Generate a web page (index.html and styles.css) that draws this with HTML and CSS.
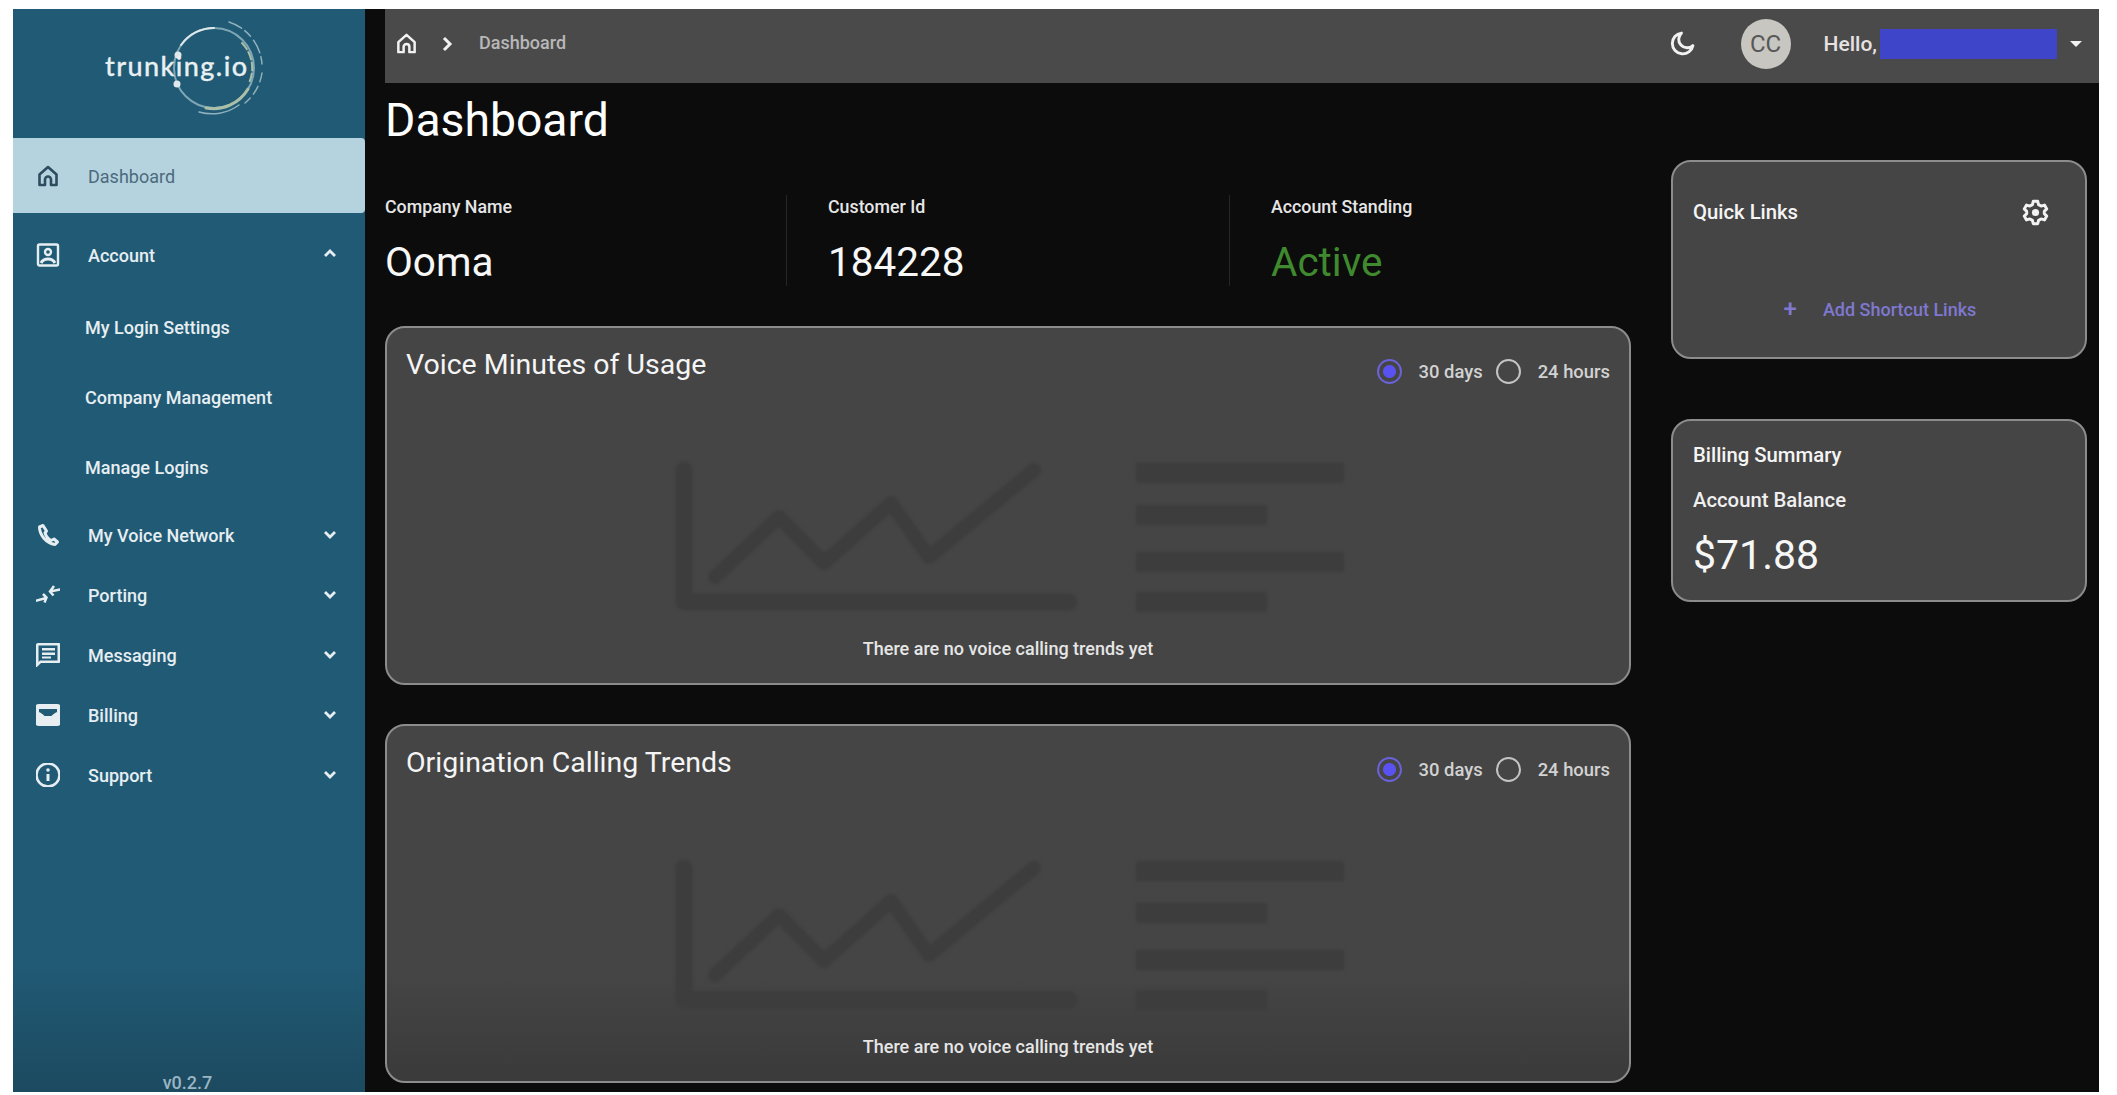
FILE: index.html
```html
<!DOCTYPE html>
<html lang="en">
<head>
  <meta charset="UTF-8">
  <title>trunking.io Dashboard</title>
  <link rel="stylesheet" href="styles.css">
</head>
<body>
  <div class="app">
    <aside class="sidebar">
      <div class="brand">
        <svg class="logo" width="190" height="110" viewBox="0 0 190 110" fill="none" stroke-linecap="round">
          <circle cx="120" cy="54" r="40" stroke="#7fa6b4" stroke-width="2"/>
          <path d="M87 31a40 40 0 0 1 33-17" stroke="#dfe9ec" stroke-width="2"/>
          <path d="M154 75a40 40 0 0 1-42 19" stroke="#a9bfa8" stroke-width="3"/>
          <path d="M135 8a48 48 0 0 1 33 42" stroke="#8fb0bd" stroke-width="1.5" stroke-dasharray="14 4 8 5"/>
          <path d="M168 59a48 48 0 0 1-17 30" stroke="#8fb0bd" stroke-width="1.5" stroke-dasharray="9 5"/>
          <path d="M145 91a46 46 0 0 1-40 7" stroke="#8fb0bd" stroke-width="1.5"/>
          <path d="M148 29a36 36 0 0 1 7 40" stroke="#a9bfa8" stroke-width="2" stroke-dasharray="8 3"/>
          <circle cx="84" cy="41" r="3.5" fill="#dfe9ec"/>
          <circle cx="83" cy="70" r="3.5" fill="#dfe9ec"/>
          <text class="logo-text" x="11" y="62" textLength="142">trunking.io</text>
        </svg>
      </div>

      <nav class="nav">
        <a class="nav-item active">
          <svg class="nav-icon" viewBox="0 0 24 24" fill="none" stroke="currentColor" stroke-width="2.600" stroke-linejoin="round"><path d="M3.500 21V10.500L12 3l8.500 7.500V21H15v-5.500a3 3 0 0 0-6 0V21z"/></svg>
          <span>Dashboard</span>
        </a>
        <a class="nav-item account">
          <svg class="nav-icon" viewBox="0 0 24 24" fill="none" stroke="currentColor" stroke-width="2.400"><rect x="2" y="1.500" width="20" height="21" rx="1.500"/><circle cx="12" cy="9" r="3"/><path d="M5 20c1.500-3 4-4 7-4s5.500 1 7 4" stroke-width="3"/></svg>
          <span>Account</span>
          <svg class="chevron up" viewBox="0 0 16 16" fill="none" stroke="currentColor" stroke-width="2.800"><path d="M3 11l5-5 5 5"/></svg>
        </a>
        <div class="sub-nav">
          <a class="sub-item">My Login Settings</a>
          <a class="sub-item">Company Management</a>
          <a class="sub-item">Manage Logins</a>
        </div>
        <a class="nav-item">
          <svg class="nav-icon" viewBox="0 0 24 24" fill="none" stroke="currentColor" stroke-width="3" stroke-linejoin="round"><path d="M7 2.500L3.500 4C3.500 12 10 20 19 21.500l2.500-2.500-3.500-3-3 1.500c-3-1.500-5-4.500-6-7.500L10.500 8z"/></svg>
          <span>My Voice Network</span>
          <svg class="chevron" viewBox="0 0 16 16" fill="none" stroke="currentColor" stroke-width="2.800"><path d="M3 5l5 5 5-5"/></svg>
        </a>
        <a class="nav-item">
          <svg class="nav-icon" viewBox="0 0 24 24" fill="none" stroke="currentColor" stroke-width="2.500"><path d="M-1 18l11-3M7 11l3.500 3.500-2 5"/><path d="M26 6L14 8.500M18 3l-4 5.500 3.500 4"/></svg>
          <span>Porting</span>
          <svg class="chevron" viewBox="0 0 16 16" fill="none" stroke="currentColor" stroke-width="2.800"><path d="M3 5l5 5 5-5"/></svg>
        </a>
        <a class="nav-item">
          <svg class="nav-icon" viewBox="0 0 24 24" fill="currentColor"><path d="M23 0H2C.900 0 0 .900 0 2l-.100 23L5 20h18c.600 0 1-.400 1-1V1c0-.600-.400-1-1-1zm-1.500 17.500H4L2.500 19V2.500h19zM6 5h13v2.600H6zm0 4.500h13v2.600H6zm0 4h9v2H6z"/></svg>
          <span>Messaging</span>
          <svg class="chevron" viewBox="0 0 16 16" fill="none" stroke="currentColor" stroke-width="2.800"><path d="M3 5l5 5 5-5"/></svg>
        </a>
        <a class="nav-item">
          <svg class="nav-icon" viewBox="0 0 24 24"><rect x="-1" y="1" width="26" height="22" rx="4" fill="currentColor"/><path d="M3 6h18v3c-2 1-4 2-5.500 4h-7C7 11 5 10 3 9z" fill="#215a75"/></svg>
          <span>Billing</span>
          <svg class="chevron" viewBox="0 0 16 16" fill="none" stroke="currentColor" stroke-width="2.800"><path d="M3 5l5 5 5-5"/></svg>
        </a>
        <a class="nav-item">
          <svg class="nav-icon" viewBox="0 0 24 24" fill="none" stroke="currentColor" stroke-width="2.600"><circle cx="12" cy="12" r="11.500"/><path d="M12 11v7" stroke-width="3"/><circle cx="12" cy="7" r="1.800" fill="currentColor" stroke="none"/></svg>
          <span>Support</span>
          <svg class="chevron" viewBox="0 0 16 16" fill="none" stroke="currentColor" stroke-width="2.800"><path d="M3 5l5 5 5-5"/></svg>
        </a>
      </nav>
      <div class="version">v0.2.7</div>
    </aside>

    <div class="main">
      <header class="topbar">
        <svg class="crumb-home" viewBox="0 0 24 24" fill="none" stroke="currentColor" stroke-width="2.600" stroke-linejoin="round"><path d="M3.500 21V10.500L12 3l8.500 7.500V21H15v-5.500a3 3 0 0 0-6 0V21z"/></svg>
        <svg class="crumb-sep" viewBox="0 0 16 16" fill="none" stroke="currentColor" stroke-width="3"><path d="M5 2l6 6-6 6"/></svg>
        <span class="crumb-text">Dashboard</span>
        <svg class="moon" viewBox="0 0 24 24" fill="none" stroke="currentColor" stroke-width="2.800" stroke-linejoin="round"><path d="M11 2a10 10 0 1 0 11 12 8 8 0 0 1-11-12z"/></svg>
        <div class="avatar">CC</div>
        <span class="hello">Hello,</span>
        <span class="redacted"></span>
        <span class="caret"></span>
      </header>

      <div class="content">
        <div class="left-col">
          <h1 class="page-title">Dashboard</h1>
          <div class="info-row">
            <div class="info-item">
              <div class="info-label">Company Name</div>
              <div class="info-value">Ooma</div>
            </div>
            <div class="info-item">
              <div class="info-label">Customer Id</div>
              <div class="info-value">184228</div>
            </div>
            <div class="info-item last">
              <div class="info-label">Account Standing</div>
              <div class="info-value active-text">Active</div>
            </div>
          </div>

          <section class="card chart-card">
            <div class="card-head">
              <h2>Voice Minutes of Usage</h2>
              <div class="range">
                <span class="radio on"></span><span class="range-label">30 days</span>
                <span class="radio"></span><span class="range-label">24 hours</span>
              </div>
            </div>
            <svg class="placeholder" width="675" height="155" viewBox="0 0 675 155" fill="none">
              <path d="M13 10V142H398" stroke="#3d3d3d" stroke-width="17" stroke-linecap="round" stroke-linejoin="round"/>
              <path d="M44 117L108 57l45 46 67-60 38 54L363 10" stroke="#3d3d3d" stroke-width="14" stroke-linecap="round" stroke-linejoin="round"/>
              <g fill="#3d3d3d">
                <rect x="465" y="3" width="208" height="20"/>
                <rect x="465" y="45" width="131" height="20"/>
                <rect x="465" y="92" width="208" height="20"/>
                <rect x="465" y="132" width="131" height="20"/>
              </g>
            </svg>
            <p class="empty-note">There are no voice calling trends yet</p>
          </section>

          <section class="card chart-card fade">
            <div class="card-head">
              <h2>Origination Calling Trends</h2>
              <div class="range">
                <span class="radio on"></span><span class="range-label">30 days</span>
                <span class="radio"></span><span class="range-label">24 hours</span>
              </div>
            </div>
            <svg class="placeholder" width="675" height="155" viewBox="0 0 675 155" fill="none">
              <path d="M13 10V142H398" stroke="#3d3d3d" stroke-width="17" stroke-linecap="round" stroke-linejoin="round"/>
              <path d="M44 117L108 57l45 46 67-60 38 54L363 10" stroke="#3d3d3d" stroke-width="14" stroke-linecap="round" stroke-linejoin="round"/>
              <g fill="#3d3d3d">
                <rect x="465" y="3" width="208" height="20"/>
                <rect x="465" y="45" width="131" height="20"/>
                <rect x="465" y="92" width="208" height="20"/>
                <rect x="465" y="132" width="131" height="20"/>
              </g>
            </svg>
            <p class="empty-note">There are no voice calling trends yet</p>
          </section>
        </div>

        <div class="right-col">
          <section class="card quick-links">
            <div class="quick-head">
              <h3>Quick Links</h3>
              <svg class="gear" viewBox="0 0 24 24" fill="none" stroke="currentColor" stroke-width="2.600" stroke-linejoin="round"><path d="M10 2h4l.700 3 2.300 1.300 3-.900 2 3.400-2.200 2.200v2l2.200 2.200-2 3.400-3-.900L14.700 19l-.700 3h-4l-.700-3L7 17.700l-3 .900-2-3.400L4.200 13v-2L2 8.800l2-3.400 3 .900L9.300 5z"/><circle cx="12" cy="12" r="3.200" fill="currentColor" stroke="none"/></svg>
            </div>
            <a class="add-link"><span class="plus">+</span><span>Add Shortcut Links</span></a>
          </section>
          <section class="card billing">
            <h3>Billing Summary</h3>
            <div class="balance-label">Account Balance</div>
            <div class="balance">$71.88</div>
          </section>
        </div>
      </div>
    </div>
  </div>
</body>
</html>
```

FILE: styles.css
```css
html {
  overflow: hidden;
}
body {
  margin: 0;
  padding: 9px 18px 3px 13px;
  height: 1095px;
  box-sizing: border-box;
  background-color: #fff;
  font-family: Roboto, Arial, sans-serif;
  color: #f2f2f2;
}
h1, h2, h3, p {
  margin: 0;
}
.app {
  display: flex;
  height: 1083px;
  overflow: hidden;
  background-color: #0c0c0c;
}

/* sidebar */
.sidebar {
  width: 352px;
  flex-shrink: 0;
  display: flex;
  flex-direction: column;
  background: linear-gradient(#215a75 0, #215a75 88%, #1c4a60 100%);
  color: #e6eef2;
}
.brand {
  height: 129px;
  display: flex;
  justify-content: center;
  align-items: flex-start;
  box-sizing: border-box;
  padding-top: 5px;
}
.logo-text {
  font-family: Lato, Roboto, sans-serif;
  font-size: 27px;
  font-weight: 500;
  fill: #e9f0f2;
  stroke: #e9f0f2;
  stroke-width: 0.3px;
}
.nav {
  display: flex;
  flex-direction: column;
}
.nav-item {
  display: flex;
  align-items: center;
  height: 60px;
  padding: 0 27px 0 23px;
  font-size: 18px;
  font-weight: 500;
}
.nav-item.active {
  height: 75px;
  background-color: #b5d2df;
  color: #4c6b7c;
  border-radius: 0 4px 4px 0;
  font-weight: 400;
}
.nav-item.active span {
  padding-top: 2px;
}
.nav-item.active .nav-icon {
  color: #2c4d5f;
}
.nav-item.account {
  margin-top: 12px;
}
.nav-icon {
  width: 24px;
  height: 24px;
  flex-shrink: 0;
  margin-right: 28px;
}
.chevron {
  width: 16px;
  height: 16px;
  margin-left: auto;
}
.chevron.up {
  margin-top: -4px;
}
.sub-nav {
  padding: 7px 0 3px;
}
.sub-item {
  display: flex;
  align-items: center;
  height: 70px;
  padding-left: 72px;
  font-size: 18px;
  font-weight: 500;
}
.version {
  margin-top: auto;
  padding-right: 3px;
  text-align: center;
  font-size: 18px;
  font-weight: 500;
  line-height: 18px;
  color: #9ab5c4;
}

/* top bar */
.main {
  flex: 1;
  min-width: 0;
  padding-left: 20px;
}
.topbar {
  display: flex;
  align-items: center;
  height: 74px;
  box-sizing: border-box;
  background-color: #4a4a4a;
  padding: 0 17px 5px 10px;
  color: #f2f2f2;
}
.crumb-home {
  width: 23px;
  height: 25px;
}
.crumb-sep {
  width: 16px;
  height: 16px;
  margin-left: 21px;
}
.crumb-text {
  margin-left: 24px;
  margin-top: -3px;
  font-size: 18px;
  font-weight: 500;
  color: #b8b8b8;
}
.moon {
  width: 25px;
  height: 25px;
  margin-left: auto;
}
.avatar {
  width: 50px;
  height: 50px;
  margin-left: 46px;
  border-radius: 50%;
  background-color: #c8c6c0;
  color: #575757;
  font-size: 24px;
  display: flex;
  align-items: center;
  justify-content: center;
}
.hello {
  margin-left: 33px;
  font-size: 21px;
  font-weight: 500;
  color: #e6e2e2;
}
.redacted {
  width: 177px;
  height: 30px;
  margin-left: 3px;
  background-color: #3e45c8;
}
.caret {
  margin-left: 13px;
  border-left: 6px solid transparent;
  border-right: 6px solid transparent;
  border-top: 6px solid #f2f2f2;
}

/* content */
.content {
  display: flex;
  gap: 40px;
}
.left-col {
  width: 1246px;
  flex-shrink: 0;
}
.right-col {
  width: 416px;
  padding-top: 77px;
}
.page-title {
  margin-top: 10px;
  font-size: 46.300px;
  font-weight: 400;
  line-height: 54px;
  color: #fff;
}
.info-row {
  display: grid;
  grid-template-columns: repeat(3, 402px);
  gap: 41px;
  margin-top: 48px;
}
.info-item {
  height: 91px;
  border-right: 1px solid #262626;
}
.info-item.last {
  border-right: none;
}
.info-label {
  font-size: 17.800px;
  font-weight: 500;
  line-height: 24px;
  color: #e6e6e6;
}
.info-value {
  margin-top: 18px;
  font-size: 40.500px;
  line-height: 50px;
  color: #f7f7f7;
}
.active-text {
  color: #3f8a2e;
}

/* cards */
.card {
  background-color: #454545;
  border: 2px solid #8c8c8c;
  border-radius: 20px;
  box-sizing: border-box;
}
.chart-card {
  height: 359px;
  margin-top: 40px;
  padding: 19px 19px 0;
  display: flex;
  flex-direction: column;
  align-items: center;
}
.chart-card.fade {
  margin-top: 39px;
  background: linear-gradient(#454545 70%, #3a3a3a 100%);
}
.card-head {
  width: 100%;
  display: flex;
  justify-content: space-between;
  height: 36px;
}
.card-head h2 {
  font-size: 28.500px;
  font-weight: 400;
  line-height: 36px;
  color: #f5f5f5;
}
.range {
  display: flex;
  align-items: center;
  margin-top: 10px;
  height: 28px;
}
.radio {
  width: 25px;
  height: 25px;
  box-sizing: border-box;
  border-radius: 50%;
  border: 2.500px solid #c4c4c4;
}
.radio.on {
  border-color: #6a62d8;
  background: radial-gradient(circle, #5a52f0 0, #5a52f0 6px, transparent 7px);
}
.range-label {
  margin-left: 17px;
  margin-right: 13px;
  font-size: 18.400px;
  font-weight: 500;
  color: #d2d2d2;
}
.range-label:last-child {
  margin-right: 0;
}
.placeholder {
  margin-top: 77px;
  flex-shrink: 0;
  filter: blur(1.500px);
}
.empty-note {
  margin-top: 22px;
  font-size: 18px;
  font-weight: 500;
  line-height: 24px;
  color: #e6e6e6;
}
.quick-links {
  height: 199px;
  padding: 0 20px;
}
.quick-head {
  display: flex;
  justify-content: space-between;
  align-items: center;
  height: 100px;
}
.quick-head h3, .billing h3 {
  font-size: 20.300px;
  font-weight: 500;
  color: #f5f5f5;
}
.gear {
  width: 27px;
  height: 27px;
  margin-right: 16px;
}
.add-link {
  display: flex;
  justify-content: center;
  align-items: center;
  gap: 26px;
  margin-top: 35px;
  padding-left: 2px;
  font-size: 18px;
  font-weight: 500;
  color: #7f78d0;
}
.plus {
  font-size: 24px;
  line-height: 24px;
}
.billing {
  height: 183px;
  margin-top: 60px;
  padding: 18px 20px 0;
}
.billing h3 {
  line-height: 32px;
}
.balance-label {
  margin-top: 13px;
  font-size: 20.300px;
  font-weight: 500;
  line-height: 32px;
  color: #f0f0f0;
}
.balance {
  margin-top: 16px;
  font-size: 41px;
  line-height: 46px;
  color: #f7f7f7;
}
```
